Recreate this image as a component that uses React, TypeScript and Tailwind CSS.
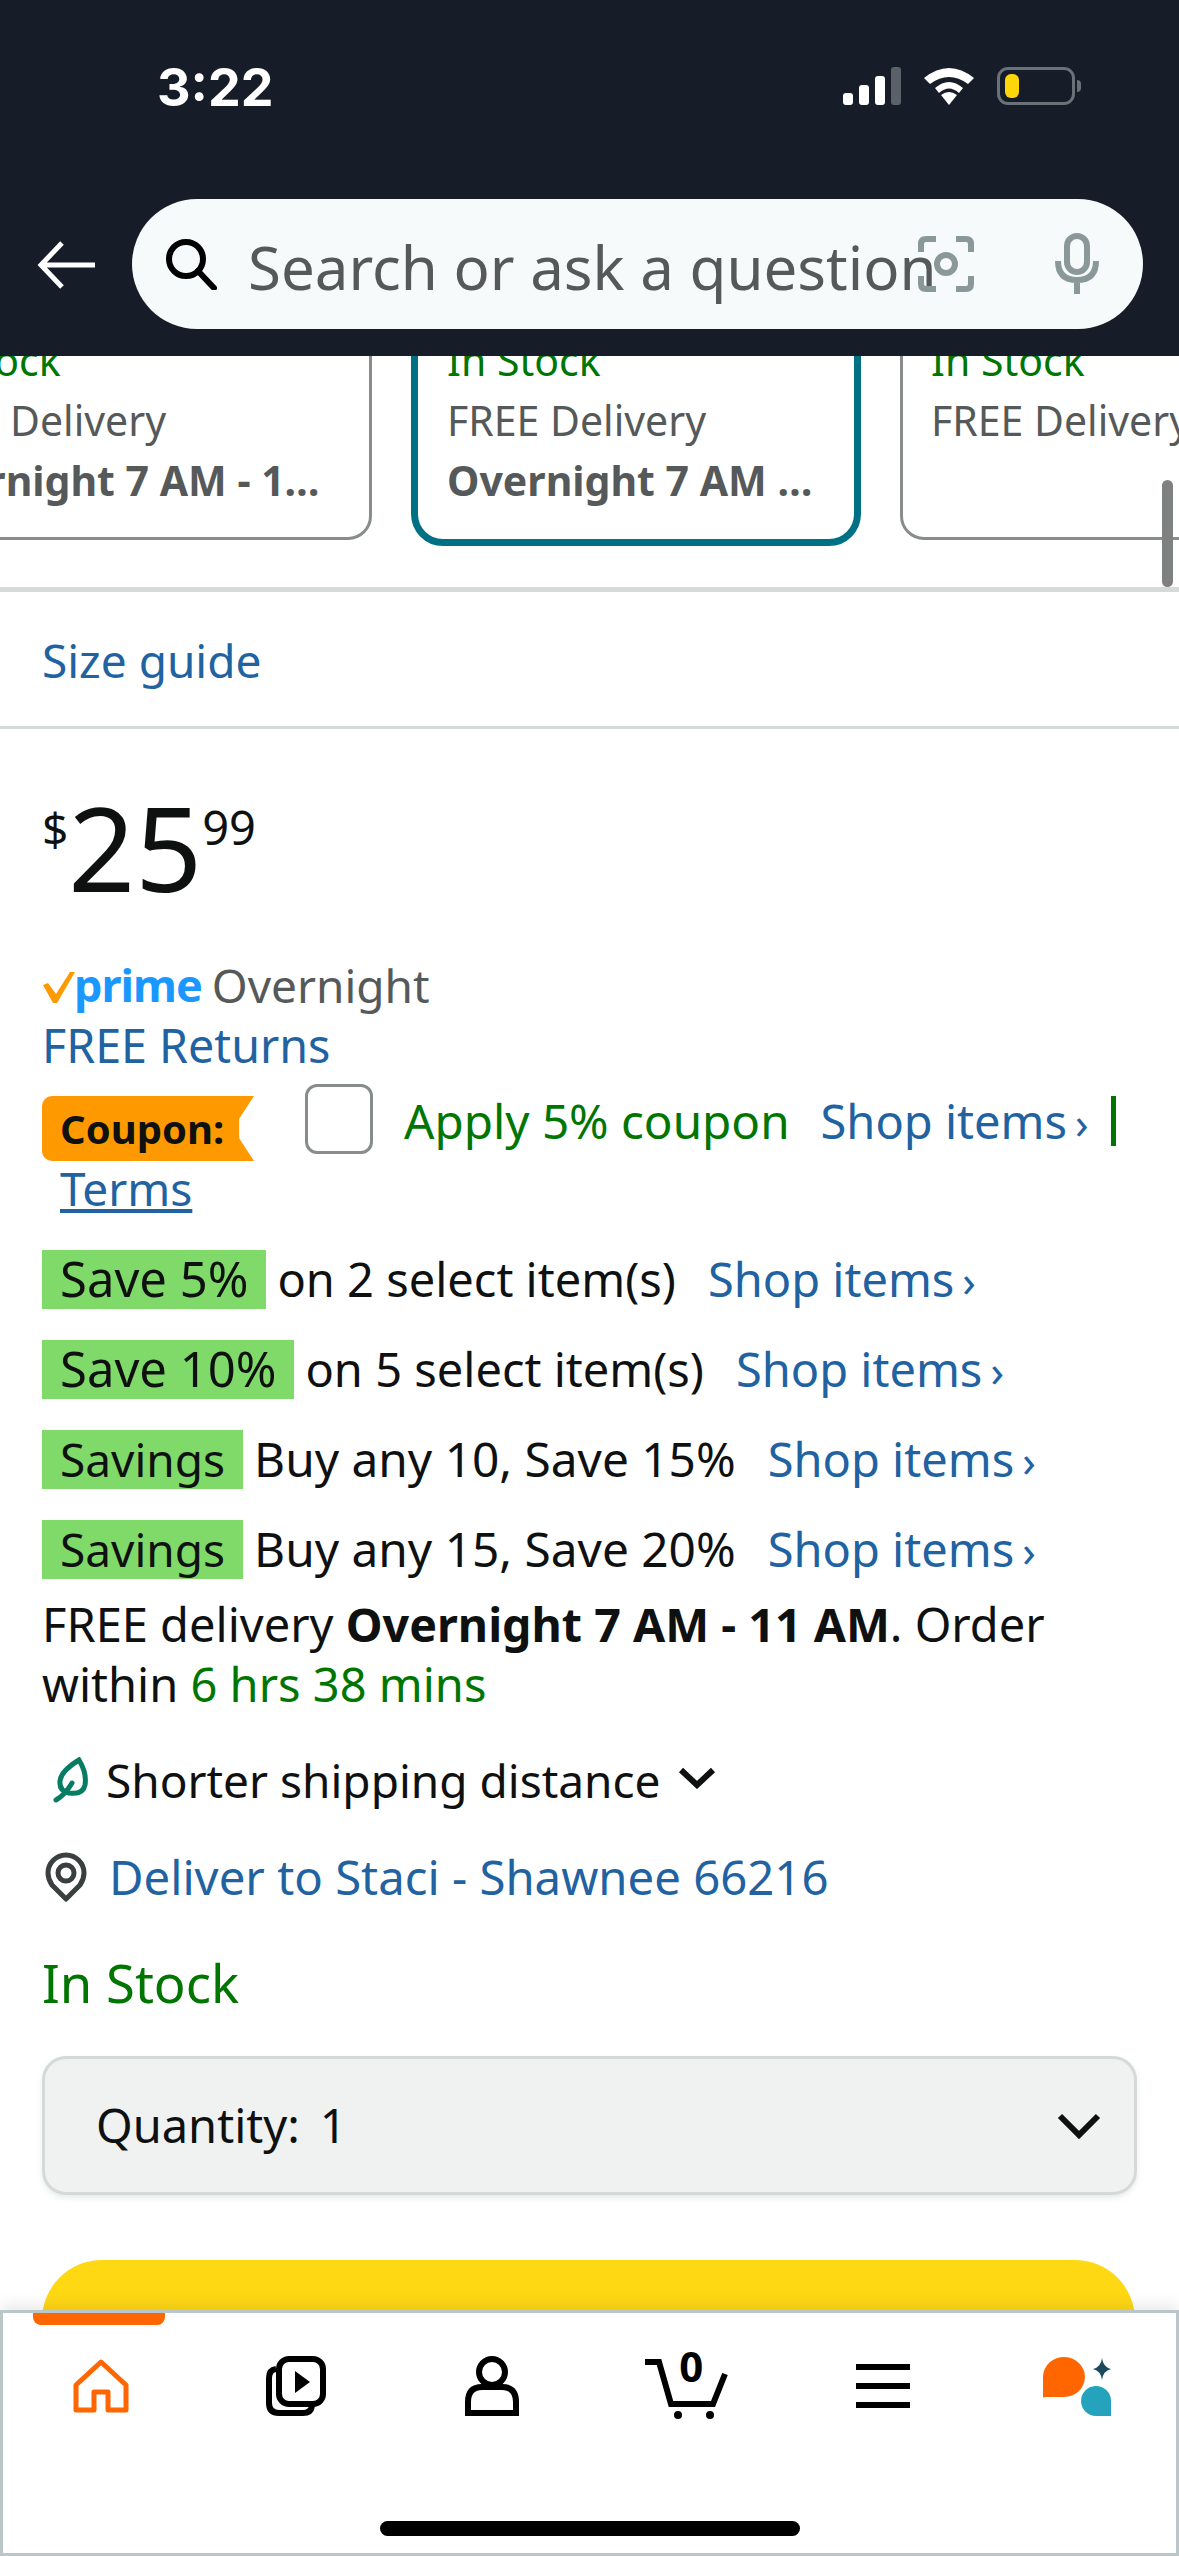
import React from "react";

function Battery() {
  return (
    <div className="flex items-center">
      <div className="flex h-[38px] w-[78px] items-center rounded-[11px] border-[3px] border-[#6b7178] pl-[5px]">
        <div className="h-[24px] w-[14px] rounded-[6px] bg-[#ffd60a]" />
      </div>
      <div className="ml-[2px] h-[12px] w-[4px] rounded-r-full bg-[#6b7178]" />
    </div>
  );
}

function StatusBar() {
  return (
    <div className="flex h-[172px] items-center pl-[157px] pr-[98px]">
      <span className="mt-[3px] font-['Inter',sans-serif] text-[52px] font-bold text-white">3:22</span>
      <div className="ml-auto flex items-center">
        <div className="flex h-[38px] items-end gap-[6px]">
          <div className="h-[12px] w-[10px] rounded-[3px] bg-white" />
          <div className="h-[20px] w-[10px] rounded-[3px] bg-white" />
          <div className="h-[29px] w-[10px] rounded-[3px] bg-white" />
          <div className="h-[38px] w-[10px] rounded-[3px] bg-[#5b6169]" />
        </div>
        <svg width="52" height="38" viewBox="0 0 52 38" className="ml-[22px]">
          <path d="M26 38 L18 28 Q26 22 34 28 Z" fill="#fff" />
          <path d="M12 21 Q26 9 40 21 L36 26 Q26 17 16 26 Z" fill="#fff" />
          <path d="M1 11 Q26 -9 51 11 L45 17 Q26 3 7 17 Z" fill="#fff" />
        </svg>
        <div className="ml-[22px]">
          <Battery />
        </div>
      </div>
    </div>
  );
}

function SearchRow() {
  return (
    <div className="flex h-[184px] items-start pl-[37px] pt-[27px]">
      <svg width="60" height="50" viewBox="0 0 60 50" className="mt-[41px]" fill="none" stroke="#fff" strokeWidth="5">
        <path d="M58 25 H5 M25 3 L4 25 L25 47" />
      </svg>
      <div className="ml-[35px] flex h-[130px] w-[1011px] items-center rounded-full bg-[#f7fafa] pl-[33px]">
        <svg width="52" height="52" viewBox="0 0 52 52" fill="none" stroke="#000" strokeWidth="6" className="shrink-0">
          <circle cx="21" cy="21" r="17" />
          <path d="M33 33 L49 50" strokeLinecap="round" />
        </svg>
        <span className="ml-[31px] mt-[5px] w-[670px] shrink-0 whitespace-nowrap text-[60px] leading-[70px] text-[#565959]">
          Search or ask a question
        </span>
        <svg width="56" height="56" viewBox="0 0 56 56" fill="none" stroke="#8b9899" strokeWidth="6" className="shrink-0">
          <path d="M3 16 V8 Q3 3 8 3 H18 M38 3 H48 Q53 3 53 8 V16 M53 40 V48 Q53 53 48 53 H38 M18 53 H8 Q3 53 3 48 V40" />
          <circle cx="28" cy="28" r="9" />
        </svg>
        <svg width="50" height="62" viewBox="0 0 50 62" fill="none" stroke="#8b9899" strokeWidth="6" className="ml-[78px] shrink-0">
          <rect x="15" y="3" width="20" height="36" rx="10" fill="#f7fafa" />
          <path d="M3 28 Q3 50 25 50 Q47 50 47 28 L41 28 Q41 44 25 44 Q9 44 9 28 Z" fill="#8b9899" stroke="none" />
          <path d="M25 50 V61" />
        </svg>
      </div>
    </div>
  );
}

function DeliveryCard({ selected, wide, second }: { selected?: boolean; wide?: boolean; second?: string }) {
  let box = "h-[240px] w-[450px] shrink-0 rounded-[24px] border-[3px] border-[#888c8c] pl-[28px] pt-[27px]";
  if (selected) box = "h-[246px] w-[450px] shrink-0 rounded-[32px] border-[7px] border-[#007185] pl-[29px] pt-[23px]";
  if (wide) box = "h-[240px] w-[496px] shrink-0 rounded-[24px] border-[3px] border-[#888c8c] pl-[28px] pt-[27px]";
  return (
    <div className={box}>
      <div className="text-[41px] leading-[60px] text-[#007600]">In Stock</div>
      <div className="whitespace-nowrap text-[41px] leading-[60px] text-[#565959]">FREE Delivery</div>
      {second ? <div className="whitespace-nowrap text-[41px] font-bold leading-[60px] text-[#565959]">{second}</div> : null}
    </div>
  );
}

function CardsRow() {
  return (
    <div className="relative h-[236px] overflow-hidden border-b-[5px] border-[#d5dbdb]">
      <div className="-ml-[124px] -mt-[56px] flex items-start gap-[39px]">
        <DeliveryCard wide second="Overnight 7 AM - 1…" />
        <DeliveryCard selected second="Overnight 7 AM …" />
        <DeliveryCard />
      </div>
      <div className="absolute right-[6px] top-[124px] h-[107px] w-[11px] rounded-full bg-[#7f8181]" />
    </div>
  );
}

function ShopItems() {
  return (
    <span className="whitespace-nowrap text-[47px] text-[#2162a1]">
      Shop items<span className="ml-[8px] text-[44px] leading-[44px]">›</span>
    </span>
  );
}

function SaveRow({ badge, text, badgeSize, textSize }: { badge: string; text: string; badgeSize: string; textSize: string }) {
  return (
    <div className="mt-[30px] flex h-[60px] items-center whitespace-nowrap pl-[42px] text-[#0f1111]">
      <span className={"flex h-[59px] items-center bg-[#7fda69] px-[18px] " + badgeSize}>{badge}</span>
      <span className={"ml-[11px] " + textSize}>{text}</span>
      <span className="ml-[32px]">
        <ShopItems />
      </span>
    </div>
  );
}

function PriceBlock() {
  return (
    <div className="flex h-[226px] items-start pl-[42px] pt-[53px] text-[#0f1111]">
      <span className="mt-[16px] text-[46px] leading-[60px]">$</span>
      <span className="text-[117px] leading-[130px]">25</span>
      <span className="mt-[15px] text-[47px] leading-[60px]">99</span>
    </div>
  );
}

function PrimeRow() {
  return (
    <div className="flex h-[60px] items-center pl-[42px]">
      <svg width="34" height="34" viewBox="0 0 34 34" className="mt-[4px] shrink-0">
        <path d="M1 15 L6 13 L14 24 L28 2 L33 2 L15 33 L11 33 Z" fill="#ff9900" />
      </svg>
      <span className="-ml-[2px] text-[45px] font-bold tracking-[-1px] text-[#1a98ff]">prime</span>
      <span className="ml-[10px] text-[46px] text-[#565959]">Overnight</span>
    </div>
  );
}

function CouponRow() {
  return (
    <div className="h-[113px] pl-[42px]">
      <div className="flex items-start">
        <div className="mt-[21px] flex h-[65px] w-[212px] shrink-0 items-center rounded-l-[10px] bg-[#ff9900] pl-[18px] text-[40px] font-bold text-[#0f1111] [clip-path:polygon(0_0,100%_0,93%_35%,93%_65%,100%_100%,0_100%)]">
          Coupon:
        </div>
        <div className="ml-[51px] mt-[9px] h-[70px] w-[68px] shrink-0 rounded-[12px] border-[3px] border-[#888c8c]" />
        <div className="ml-[31px] mt-[16px] flex h-[60px] items-center whitespace-nowrap text-[47.6px] leading-[60px]">
          <span className="text-[#007600]">Apply 5% coupon</span>
          <span className="ml-[31px]">
            <ShopItems />
          </span>
          <span className="ml-[22px] h-[50px] w-[5px] bg-[#007600]" />
        </div>
      </div>
    </div>
  );
}

function LeafIcon() {
  return (
    <svg width="36" height="46" viewBox="0 0 36 46" fill="none" stroke="#067d62" strokeWidth="5" strokeLinecap="round" className="shrink-0">
      <path d="M26 3 Q34 16 32 28 Q30 38 16 36 Q6 34 7 24 Q8 14 26 3 Z" />
      <path d="M3 43 Q12 38 19 26" />
    </svg>
  );
}

function PinIcon() {
  return (
    <svg width="42" height="50" viewBox="0 0 42 50" fill="none" className="shrink-0">
      <path d="M21 47 L7 33 Q3 27 3 21 A18 18 0 0 1 39 21 Q39 27 35 33 Z" stroke="#3a3f3f" strokeWidth="5" strokeLinejoin="round" />
      <circle cx="21" cy="21" r="8" stroke="#3a3f3f" strokeWidth="5" />
    </svg>
  );
}

function DeliveryInfo() {
  return (
    <>
      <div className="mt-[15px] pl-[42px] text-[47px] leading-[60px] text-[#0f1111]">
        FREE delivery <b className="text-[46.6px]">Overnight 7 AM - 11 AM</b>. Order
        <br />
        within <span className="text-[#007600]">6 hrs 38 mins</span>
      </div>
      <div className="mt-[36px] flex h-[60px] items-center pl-[53px] text-[46px] text-[#0f1111]">
        <LeafIcon />
        <span className="ml-[17px]">Shorter shipping distance</span>
        <svg width="38" height="22" viewBox="0 0 38 22" fill="none" stroke="#0f1111" strokeWidth="6" className="ml-[17px] -mt-[4px]">
          <path d="M3 3 L19 18 L35 3" />
        </svg>
      </div>
      <div className="mt-[37px] flex h-[60px] items-center pl-[45px] text-[47.3px] text-[#2162a1]">
        <PinIcon />
        <span className="ml-[22px]">Deliver to Staci - Shawnee 66216</span>
      </div>
      <div className="mt-[46px] h-[60px] pl-[42px] text-[52.6px] leading-[60px] text-[#007600]">In Stock</div>
    </>
  );
}

function QuantitySelect() {
  return (
    <div className="ml-[42px] mt-[43px] flex h-[139px] w-[1095px] items-center rounded-[24px] border-[3px] border-[#d5d9d9] bg-[#f0f2f2] pl-[51px] pr-[33px] text-[47px] text-[#0f1111] shadow-[0_3px_5px_rgba(213,217,217,0.5)]">
      <span>Quantity:</span>
      <span className="ml-[20px]">1</span>
      <svg width="44" height="26" viewBox="0 0 44 26" fill="none" stroke="#0f1111" strokeWidth="6" className="ml-auto">
        <path d="M3 3 L22 22 L41 3" />
      </svg>
    </div>
  );
}

function HomeIcon() {
  return (
    <svg width="56" height="54" viewBox="0 0 56 54" fill="none" stroke="#ff6600" strokeWidth="5">
      <path d="M3 51 V26 L28 3 L53 26 V51 H35 V33 H21 V51 Z" strokeLinejoin="round" />
    </svg>
  );
}

function VideoIcon() {
  return (
    <svg width="60" height="60" viewBox="0 0 60 60" fill="none" stroke="#000" strokeWidth="6">
      <path d="M10 13 Q3 14 3 22 V47 Q3 57 13 57 H37 Q45 57 46 50" />
      <rect x="13" y="3" width="44" height="45" rx="10" />
      <path d="M29 15 L44 26 L29 37 Z" fill="#000" stroke="none" />
    </svg>
  );
}

function UserIcon() {
  return (
    <svg width="56" height="60" viewBox="0 0 56 60" fill="none" stroke="#000" strokeWidth="6">
      <circle cx="28" cy="16" r="13" />
      <path d="M4 57 V46 Q4 31 18 31 H38 Q52 31 52 46 V57 Z" />
    </svg>
  );
}

function CartIcon() {
  return (
    <div className="relative h-[68px] w-[84px]">
      <svg width="84" height="68" viewBox="0 0 84 68" fill="none" stroke="#000" strokeWidth="6">
        <path d="M0 10 H14 L26 52 H68 L80 22" />
        <circle cx="33" cy="63" r="4" fill="#000" stroke="none" />
        <circle cx="65" cy="63" r="4" fill="#000" stroke="none" />
      </svg>
      <span className="absolute left-[30px] top-[-14px] w-[32px] text-center text-[42px] font-bold leading-[56px] text-black">0</span>
    </div>
  );
}

function MenuIcon() {
  return (
    <div className="flex h-[44px] w-[54px] flex-col justify-between">
      <div className="h-[6px] bg-black" />
      <div className="h-[6px] bg-black" />
      <div className="h-[6px] bg-black" />
    </div>
  );
}

function RufusIcon() {
  return (
    <svg width="70" height="60" viewBox="0 0 70 60">
      <path d="M0 42 V20 A21 20 0 1 1 21 41 H3 Q0 41 0 42 Z" fill="#ff6600" />
      <path d="M68 60 V44 A15 15 0 1 0 53 60 Z" fill="#25a3bd" />
      <path d="M59 2 Q60 11 68 13 Q60 15 59 24 Q58 15 50 13 Q58 11 59 2 Z" fill="#1c4a5c" />
    </svg>
  );
}

function BottomNav() {
  const icons = [<HomeIcon key="h" />, <VideoIcon key="v" />, <UserIcon key="u" />, <CartIcon key="c" />, <MenuIcon key="m" />, <RufusIcon key="r" />];
  return (
    <nav className="relative z-10 h-[246px] shrink-0 border-[3px] border-[#bbc6c9] bg-white shadow-[0_-6px_14px_rgba(0,0,0,0.08)]">
      <div className="absolute left-[30px] top-0 h-[12px] w-[132px] rounded-b-[8px] bg-[#ff6600]" />
      <div className="grid h-[146px] grid-cols-6">
        {icons.map((icon, i) => (
          <div key={i} className="flex items-center justify-center">
            {icon}
          </div>
        ))}
      </div>
      <div className="mx-auto mt-[62px] h-[15px] w-[420px] rounded-full bg-black" />
    </nav>
  );
}

export default function App() {
  return (
    <div className="flex h-[2556px] w-[1179px] flex-col overflow-hidden bg-white font-['Noto_Sans','Open_Sans',sans-serif]">
      <header className="relative z-10 h-[356px] shrink-0 bg-[#161d28]">
        <StatusBar />
        <SearchRow />
      </header>
      <main className="min-h-0 flex-1 overflow-hidden">
        <CardsRow />
        <div className="flex h-[137px] items-center border-b-[3px] border-[#d5d9d9] pl-[42px] pt-[3px] text-[46px] text-[#2162a1]">
          Size guide
        </div>
        <PriceBlock />
        <PrimeRow />
        <div className="flex h-[60px] items-center pl-[42px] pt-[2px] text-[46.6px] text-[#2162a1]">FREE Returns</div>
        <CouponRow />
        <div className="-mt-[30px] h-[61px] pl-[60px] text-[46px] leading-[60px] text-[#2162a1] underline">Terms</div>
        <SaveRow badge="Save 5%" badgeSize="text-[49px]" textSize="text-[47px]" text="on 2 select item(s)" />
        <SaveRow badge="Save 10%" badgeSize="text-[49px]" textSize="text-[47px]" text="on 5 select item(s)" />
        <SaveRow badge="Savings" badgeSize="text-[46px]" textSize="text-[47.8px]" text="Buy any 10, Save 15%" />
        <SaveRow badge="Savings" badgeSize="text-[46px]" textSize="text-[47.8px]" text="Buy any 15, Save 20%" />
        <DeliveryInfo />
        <QuantitySelect />
        <div className="ml-[42px] mt-[65px] h-[120px] w-[1093px] rounded-[60px] bg-[#ffd814]" />
      </main>
      <BottomNav />
    </div>
  );
}
